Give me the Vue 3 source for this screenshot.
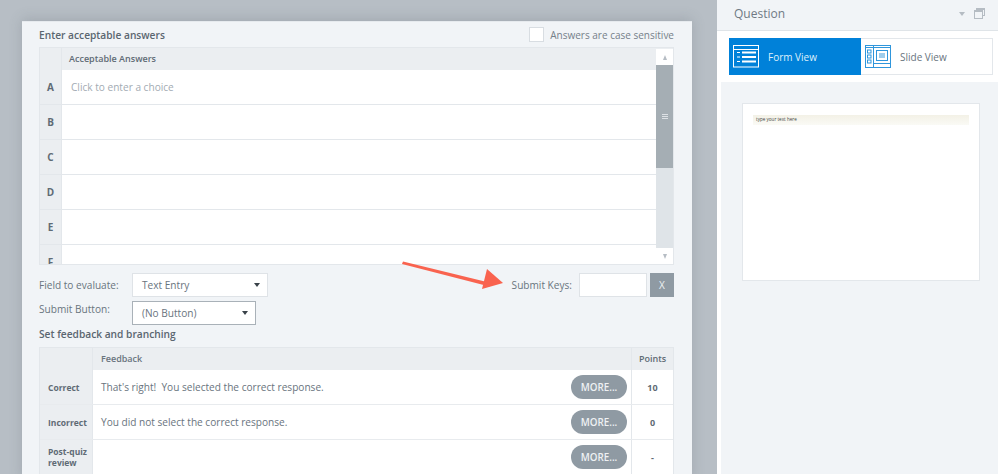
<script setup>
const choices = ["A", "B", "C", "D", "E", "F"];
const feedback = [
  { label: "Correct", text: "That's right!\u00a0\u00a0You selected the correct response.", points: "10" },
  { label: "Incorrect", text: "You did not select the correct response.", points: "0" },
  { label: "Post-quiz review", text: "", points: "-" },
];
</script>

<template>
  <div class="page">
    <div class="stage">
      <div class="panel">
        <div class="title-row">
          <h2 class="section">Enter acceptable answers</h2>
          <label class="case">
            <span class="checkbox"></span>
            Answers are case sensitive
          </label>
        </div>

        <div class="answers">
          <div class="answers-head">
            <div class="corner"></div>
            <div class="head-label">Acceptable Answers</div>
          </div>
          <div v-for="c in choices" :key="c" class="answer-row">
            <div class="letter">{{ c }}</div>
            <div class="cell">
              <span v-if="c === 'A'" class="placeholder">Click to enter a choice</span>
            </div>
          </div>
          <div class="scrollbar">
            <div class="scroll-btn"><span class="up"></span></div>
            <div class="thumb"><span></span><span></span><span></span></div>
            <div class="track"></div>
            <div class="scroll-btn"><span class="down"></span></div>
          </div>
        </div>

        <div class="form-row first">
          <span class="form-label">Field to evaluate:</span>
          <div class="select wide">Text Entry<i class="caret"></i></div>
          <span class="keys-label">Submit Keys:</span>
          <div class="keys-input"></div>
          <div class="keys-clear">X</div>
        </div>
        <div class="form-row second">
          <span class="form-label raised">Submit Button:</span>
          <div class="select narrow">(No Button)<i class="caret"></i></div>
        </div>

        <h2 class="section feedback-title">Set feedback and branching</h2>

        <div class="feedback">
          <div class="fb-row fb-head">
            <div class="fb-label"></div>
            <div class="fb-text">Feedback</div>
            <div class="fb-points">Points</div>
          </div>
          <div v-for="row in feedback" :key="row.label" class="fb-row">
            <div class="fb-label">{{ row.label }}</div>
            <div class="fb-text">
              <span>{{ row.text }}</span>
              <button class="more">MORE...</button>
            </div>
            <div class="fb-points">{{ row.points }}</div>
          </div>
        </div>
      </div>

      <svg class="arrow" width="110" height="34" viewBox="0 0 110 34">
        <path d="M1 1.500 L89 23 L87.500 26.500 L0 4 Z" fill="#f9634f" />
        <path d="M85 9 L101 23 L80 29 Z" fill="#f9634f" />
      </svg>
    </div>

    <aside class="side">
      <header class="side-head">
        <span class="side-title">Question</span>
        <span class="side-tools">
          <i class="side-caret"></i>
          <svg width="11" height="11" viewBox="0 0 11 11" fill="none" stroke="#b5bcc3">
            <rect x="2.500" y="0.500" width="8" height="7" />
            <rect x="0.500" y="2.500" width="8" height="8" fill="#f1f4f7" />
            <path d="M0.500 3.500 H8.500 M2.500 1.500 H10.500" />
          </svg>
        </span>
      </header>

      <div class="views">
        <div class="view active">
          <svg width="27" height="23" viewBox="0 0 27 23" fill="none" stroke="#fff">
            <rect x="0.500" y="0.500" width="25" height="21.500" />
            <path d="M1 4.500 H25" />
            <path d="M4 7.500 H7 M4 12 H7 M4 16.500 H7" />
            <path d="M9 7.500 H23 M9 12 H23 M9 16.500 H23" stroke-width="2" />
          </svg>
          Form View
        </div>
        <div class="view">
          <svg width="27" height="24" viewBox="0 0 27 24" fill="none" stroke="#2f96dc">
            <rect x="0.500" y="0.500" width="25" height="22" />
            <path d="M8.500 1 V23 M9 18.500 H25" />
            <path d="M1 2.500 H25" />
            <rect x="2.500" y="5" width="3.500" height="3" />
            <rect x="2.500" y="10" width="3.500" height="3" />
            <rect x="2.500" y="15" width="3.500" height="3" />
            <rect x="11.500" y="5.500" width="11" height="10" />
            <rect x="14" y="8" width="6" height="5" fill="#9fcdec" stroke="none" />
          </svg>
          Slide View
        </div>
      </div>

      <div class="preview-area">
        <div class="slide">
          <div class="slide-strip">type your text here</div>
        </div>
      </div>
    </aside>
  </div>
</template>

<style scoped>
.page {
  display: flex;
  width: 998px;
  height: 474px;
  overflow: hidden;
  background: #b6bdc4;
  font-family: "Open Sans", "Noto Sans", sans-serif;
  font-size: 10.1px;
  color: #5f6b75;
}
.stage {
  position: relative;
  width: 717px;
  flex: none;
  padding: 21px 0 0 22px;
  box-sizing: border-box;
  background: #b7bec5;
}
.panel {
  width: 670px;
  height: 460px;
  box-sizing: border-box;
  padding: 0 18px 0 17px;
  background: #f1f4f7;
  border-top: 1px solid #e6eaee;
  box-shadow: 0 -2px 12px rgba(80, 90, 100, 0.22);
}
.title-row {
  display: flex;
  align-items: center;
  justify-content: space-between;
  height: 25px;
}
.section {
  margin: 0;
  font-size: 10.2px;
  font-weight: 600;
  color: #5a6670;
}
.case {
  display: flex;
  align-items: center;
  gap: 6px;
  font-size: 10px;
  color: #75808a;
}
.checkbox {
  width: 13px;
  height: 13px;
  background: #fff;
  border: 1px solid #d8dde2;
}
.answers {
  position: relative;
  width: 635px;
  height: 218px;
  overflow: hidden;
  box-sizing: border-box;
  border: 1px solid #e3e7eb;
  border-top: 0;
}
.answers-head {
  display: flex;
  height: 23px;
  background: #ebeef1;
  border-top: 1px solid #e3e7eb;
  box-sizing: border-box;
}
.corner {
  width: 21px;
  border-right: 1px solid #e3e7eb;
}
.head-label {
  padding-left: 7px;
  line-height: 21px;
  font-size: 9px;
  font-weight: 600;
  color: #5f6b75;
}
.answer-row {
  display: flex;
  height: 35px;
  flex: none;
}
.letter {
  width: 21px;
  flex: none;
  background: #ebeef1;
  border-right: 1px solid #e3e7eb;
  border-bottom: 1px solid #e3e7eb;
  text-align: center;
  line-height: 35px;
  font-size: 10px;
  font-weight: 700;
  color: #5f6b75;
}
.cell {
  flex: 1;
  background: #fff;
  border-bottom: 1px solid #e3e7eb;
  padding-left: 9px;
  line-height: 35px;
}
.placeholder {
  color: #a3abb3;
}
.scrollbar {
  position: absolute;
  top: 2px;
  right: 0;
  bottom: 0;
  width: 17px;
  display: flex;
  flex-direction: column;
  background: #dfe4e8;
}
.scroll-btn {
  height: 16px;
  flex: none;
  background: #fff;
  display: flex;
  align-items: center;
  justify-content: center;
}
.up,
.down {
  width: 0;
  height: 0;
  border-left: 2.500px solid transparent;
  border-right: 2.500px solid transparent;
}
.up {
  border-bottom: 5px solid #b6bdc4;
}
.down {
  border-top: 5px solid #b6bdc4;
}
.thumb {
  height: 103px;
  flex: none;
  background: #a5aeb4;
  display: flex;
  flex-direction: column;
  align-items: center;
  justify-content: center;
  gap: 1px;
}
.thumb span {
  width: 6px;
  height: 1px;
  background: #dde1e5;
}
.track {
  flex: 1;
}
.form-row {
  display: flex;
  align-items: center;
  width: 635px;
}
.form-row.first {
  margin-top: 8px;
  height: 24px;
}
.form-row.second {
  margin-top: 4px;
  height: 24px;
}
.form-label {
  width: 93px;
  flex: none;
  color: #69747e;
}
.form-label.raised {
  align-self: flex-start;
  line-height: 16px;
}
.select {
  position: relative;
  box-sizing: border-box;
  height: 24px;
  line-height: 22px;
  padding-left: 9px;
  background: #fff;
  border: 1px solid #dfe3e7;
  color: #69747e;
}
.select.wide {
  width: 136px;
}
.select.narrow {
  width: 124px;
  border-color: #a9b1b8;
}
.caret {
  position: absolute;
  right: 7px;
  top: 9px;
  width: 0;
  height: 0;
  border-left: 3.500px solid transparent;
  border-right: 3.500px solid transparent;
  border-top: 4px solid #3a4249;
}
.keys-label {
  margin-left: auto;
  margin-right: 7px;
  color: #69747e;
}
.keys-input {
  width: 68px;
  height: 24px;
  box-sizing: border-box;
  background: #fff;
  border: 1px solid #dfe3e7;
}
.keys-clear {
  width: 24px;
  height: 24px;
  margin-left: 3px;
  background: #8f9aa3;
  color: #eef1f3;
  text-align: center;
  line-height: 24px;
}
.feedback-title {
  height: 17px;
  line-height: 19px;
}
.feedback {
  width: 635px;
  margin-top: 5px;
  border: 1px solid #e3e7eb;
  border-bottom: 0;
  box-sizing: border-box;
}
.fb-row {
  display: flex;
  height: 35px;
  border-bottom: 1px solid #e8ebee;
  box-sizing: border-box;
}
.fb-head {
  height: 22px;
  border-bottom: 0;
  background: #ebeef1;
}
.fb-label {
  width: 53px;
  flex: none;
  box-sizing: border-box;
  padding: 0 0 0 8px;
  display: flex;
  align-items: center;
  background: #ebeef1;
  border-right: 1px solid #e3e7eb;
  font-size: 8.500px;
  font-weight: 700;
  line-height: 11px;
  color: #5f6b75;
}
.fb-text {
  flex: 1;
  display: flex;
  align-items: center;
  justify-content: space-between;
  padding: 0 4px 0 8px;
  background: #fff;
  color: #69747e;
}
.fb-head .fb-text {
  background: none;
  font-size: 9px;
  font-weight: 600;
  padding-bottom: 2px;
}
.fb-points {
  width: 42px;
  flex: none;
  box-sizing: border-box;
  display: flex;
  align-items: center;
  justify-content: center;
  background: #fff;
  border-left: 1px solid #e3e7eb;
  font-size: 9px;
  font-weight: 700;
  color: #5f6b75;
}
.fb-head .fb-points {
  background: none;
  font-weight: 600;
  padding-bottom: 2px;
}
.more {
  width: 56px;
  height: 24px;
  padding: 0;
  border: 0;
  border-radius: 12px;
  background: #8f9aa3;
  color: #eef1f3;
  font: 600 9.800px "Open Sans", "Noto Sans", sans-serif;
}
.arrow {
  position: absolute;
  left: 402px;
  top: 260px;
}
.side {
  flex: 1;
  display: flex;
  flex-direction: column;
  background: #fff;
}
.side-head {
  display: flex;
  align-items: center;
  justify-content: space-between;
  height: 31px;
  box-sizing: border-box;
  padding: 0 13px 3px 17px;
  background: #f1f4f7;
  border-bottom: 1px solid #dfe4e8;
}
.side-title {
  font-size: 12px;
  color: #6f7a84;
}
.side-tools {
  display: flex;
  align-items: center;
  gap: 9px;
}
.side-caret {
  width: 0;
  height: 0;
  border-left: 3px solid transparent;
  border-right: 3px solid transparent;
  border-top: 4px solid #b5bcc3;
}
.views {
  display: flex;
  height: 51px;
  box-sizing: border-box;
  padding: 7px 5px 7px 12px;
}
.view {
  flex: 1;
  display: flex;
  align-items: center;
  gap: 8px;
  box-sizing: border-box;
  padding-left: 4px;
  border: 1px solid #e3e7eb;
  border-left: 0;
  font-size: 10px;
  color: #69747e;
}
.view.active {
  background: #0081d9;
  border-color: #0081d9;
  color: #dff0fb;
}
.preview-area {
  flex: 1;
  margin-left: 4px;
  background: #f1f4f7;
  padding: 21px 18px 0 21px;
}
.slide {
  height: 178px;
  box-sizing: border-box;
  padding: 11px 10px;
  background: #fff;
  border: 1px solid #e3e7eb;
}
.slide-strip {
  height: 10px;
  padding-left: 3px;
  background: linear-gradient(#f3f1e6, #fafaf5);
  font-size: 4.600px;
  line-height: 9px;
  color: #444;
}
</style>

<style>
html,
body {
  margin: 0;
  overflow: hidden;
}
</style>
